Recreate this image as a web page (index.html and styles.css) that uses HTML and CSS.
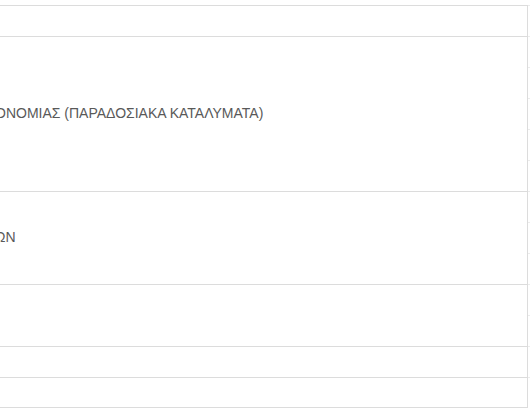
FILE: index.html
```html
<!DOCTYPE html>
<html lang="el">
<head>
<meta charset="utf-8">
<link rel="stylesheet" href="styles.css">
</head>
<body>
<div class="page">
  <div class="main">
    <div class="row h31"></div>
    <div class="row h155"><span class="cell-text">ΟΝΟΜΙΑΣ (ΠΑΡΑΔΟΣΙΑΚΑ ΚΑΤΑΛΥΜΑΤΑ)</span></div>
    <div class="row h93"><span class="cell-text">ΩΝ</span></div>
    <div class="row h62"></div>
    <div class="row h31"></div>
    <div class="row h31 last"></div>
  </div>
  <div class="side">
    <div class="tick"></div><div class="tick"></div><div class="tick"></div><div class="tick"></div>
    <div class="tick"></div><div class="tick"></div><div class="tick"></div><div class="tick"></div>
    <div class="tick"></div><div class="tick"></div><div class="tick"></div><div class="tick"></div>
    <div class="tick"></div>
  </div>
</div>
</body>
</html>
```
FILE: styles.css
```css
html, body {
  margin: 0;
  padding: 0;
  background: #fff;
  overflow: hidden;
}
.page {
  display: flex;
  padding-top: 5px;
  width: 530px;
}
.main {
  width: 527px;
  border-right: 1px solid #dcdcdc;
  overflow: hidden;
}
.row {
  box-sizing: border-box;
  border-top: 1px solid #dcdcdc;
  display: flex;
  align-items: center;
}
.row.last {
  border-bottom: 1px solid #dcdcdc;
}
.h31 { height: 31px; }
.h155 { height: 155px; }
.h93 { height: 93px; }
.h62 { height: 62px; }
.cell-text {
  font-family: "Liberation Sans", Arial, sans-serif;
  font-size: 14px;
  line-height: 16px;
  color: #595959;
  margin-left: -5px;
  margin-bottom: 2px;
  white-space: nowrap;
}
.side {
  flex: 1;
}
.tick {
  height: 31px;
  box-sizing: border-box;
  border-top: 1px solid #ececec;
}
```
